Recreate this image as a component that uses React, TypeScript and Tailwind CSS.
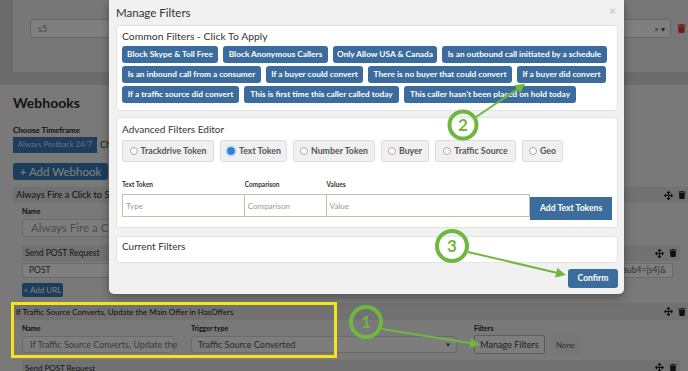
import React from 'react';
import { FaTrash, FaArrowsAlt } from 'react-icons/fa';

const filterRows = [
  [
    { label: 'Block Skype & Toll Free', w: 'w-[96px]' },
    { label: 'Block Anonymous Callers', w: 'w-[105px]' },
    { label: 'Only Allow USA & Canada', w: 'w-[104px]' },
    { label: 'Is an outbound call initiated by a schedule', w: 'w-[165px]' },
  ],
  [
    { label: 'Is an inbound call from a consumer', w: 'w-[139px]' },
    { label: 'If a buyer could convert', w: 'w-[97px]' },
    { label: 'There is no buyer that could convert', w: 'w-[144px]' },
    { label: 'If a buyer did convert', w: 'w-[89px]' },
  ],
  [
    { label: 'If a traffic source did convert', w: 'w-[117px]' },
    { label: 'This is first time this caller called today', w: 'w-[155px]' },
    { label: "This caller hasn't been placed on hold today", w: 'w-[172px]' },
  ],
];

const tokenTypes = [
  { label: 'Trackdrive Token', w: 'w-[92px]' },
  { label: 'Text Token', w: 'w-[67px]', checked: true },
  { label: 'Number Token', w: 'w-[82px]' },
  { label: 'Buyer', w: 'w-[48px]' },
  { label: 'Traffic Source', w: 'w-[81px]' },
  { label: 'Geo', w: 'w-[41px]' },
];

const RowIcons = ({ className = '' }: { className?: string }) => (
  <div className={`flex items-center gap-[5px] text-[#222] ${className}`}>
    <FaArrowsAlt size={9} />
    <FaTrash size={8} />
  </div>
);

const ModalPanel = ({ children, className = '' }: { children: React.ReactNode; className?: string }) => (
  <div className={`bg-white border border-[#e3e3e3] rounded-[3px] px-[5px] ${className}`}>{children}</div>
);

const App: React.FC = () => {
  return (
    <div className="relative w-[688px] h-[371px] overflow-hidden bg-[#d6d6d6] font-[Lato,'Liberation_Sans',Arial,sans-serif]">
      {/* Page behind the modal */}
      <div className="flex flex-col">
        <div className="ml-[13px] h-[72px] bg-[#efefef] flex items-start pt-[19px] pl-[17px] pr-[2px] gap-[6px]">
          <div className="flex-1 h-[19px] bg-white border border-[#cfcfcf] rounded-[3px] flex items-center pl-[7px] pr-[5px] text-[9px] text-[#888]">
            <span className="flex-1">s5</span>
            <span className="text-[8px] text-[#555]">× ▾</span>
          </div>
          <FaTrash size={9} className="mt-[5px] text-[#e03b3b]" />
        </div>

        <div className="mt-[13px] bg-[#f3f3f3] flex flex-col pl-[13px] h-[300px]">
          <div className="pt-[9px] text-[14px] leading-[18px] font-bold text-[#2a2a2a]">Webhooks</div>
          <div className="mt-[13px] text-[8px] leading-[10px] font-bold text-[#222]">Choose Timeframe</div>
          <div className="mt-[2px] flex items-center gap-[3px]">
            <div className="w-[84px] h-[16px] bg-[#3c79b6] flex items-center justify-center text-[7.6px] text-[#cfe0f2] whitespace-nowrap">Always Postback 24/7</div>
            <span className="text-[9px] text-[#333]">Ch</span>
          </div>
          <div className="mt-[10px] w-[95px] h-[17px] rounded-[3px] bg-[#397ab9] flex items-center justify-center text-[11.5px] text-white">+ Add Webhook</div>

          <div className="mt-[7px] h-[16px] bg-[#e2e2e2] flex items-center pl-[3px] text-[9.2px] text-[#222]">
            <span className="flex-1">Always Fire a Click to Show a Conversion</span>
            <RowIcons className="pr-[2px]" />
          </div>
          <div className="flex flex-col pl-[9px] pr-[8px]">
            <div className="mt-[3px] text-[7px] leading-[10px] font-bold text-[#222]">Name</div>
            <div className="mt-[3px] w-[320px] h-[18px] bg-[#fafafa] border border-[#d6d6d6] rounded-[3px] flex items-center pl-[8px] text-[11.5px] text-[#999]">
              Always Fire a Click to Show a Conversion
            </div>
            <div className="mt-[8px] h-[16px] bg-[#e2e2e2] flex items-center pl-[3px] text-[8.5px] text-[#333]">
              <span className="flex-1">Send POST Request</span>
              <RowIcons className="pr-[3px]" />
            </div>
            <div className="mt-[2px] flex gap-[5px] pr-[7px]">
              <div className="w-[200px] h-[15px] bg-white border border-[#d6d6d6] flex items-center pl-[6px] text-[8.5px] text-[#444]">POST</div>
              <div className="flex-1 h-[15px] bg-white border border-[#d6d6d6] flex items-center justify-end pr-[6px] text-[8.5px] text-[#666]">
                http://example.com/?sub4=[s4]&amp;
              </div>
            </div>
            <div className="mt-[5px] w-[41px] h-[14px] rounded-[2px] bg-[#397ab9] flex items-center justify-center text-[8px] text-white">+ Add URL</div>
          </div>

          <div className="mt-[6px] h-[17px] bg-[#e2e2e2] flex items-center pl-[3px] text-[8px] text-[#222]">
            <span className="flex-1">If Traffic Source Converts, Update the Main Offer in HasOffers</span>
            <RowIcons className="pr-[2px]" />
          </div>
          <div className="flex flex-col pl-[9px] pr-[8px]">
            <div className="mt-[3px] flex text-[7px] leading-[10px] font-bold text-[#222]">
              <span className="w-[169px]">Name</span>
              <span className="w-[283px]">Trigger type</span>
              <span>Filters</span>
            </div>
            <div className="mt-[2px] flex items-center">
              <div className="w-[152px] h-[17px] bg-[#fafafa] border border-[#d6d6d6] rounded-[3px] flex items-center pl-[7px] text-[9px] text-[#777] whitespace-nowrap">
                If Traffic Source Converts, Update the
              </div>
              <div className="ml-[17px] w-[266px] h-[17px] bg-[#fafafa] border border-[#d6d6d6] rounded-[3px] flex items-center pl-[6px] pr-[5px] text-[9px] text-[#555]">
                <span className="flex-1">Traffic Source Converted</span>
                <span className="text-[6px] text-[#444]">▼</span>
              </div>
              <div className="ml-[17px] w-[71px] h-[19px] bg-[#fafafa] border border-[#bdbdbd] rounded-[2px] flex items-center justify-center text-[9px] text-[#444]">Manage Filters</div>
              <div className="ml-[6px] w-[29px] h-[19px] bg-[#ececec] flex items-center justify-center text-[8px] text-[#666]">None</div>
            </div>
            <div className="mt-[6px] h-[16px] bg-[#e2e2e2] flex items-start pt-[3px] pl-[3px] text-[8px] text-[#333]">
              <span className="flex-1 leading-[10px]">Send POST Request</span>
              <RowIcons className="pr-[3px]" />
            </div>
          </div>
        </div>
      </div>

      {/* Backdrop */}
      <div className="absolute inset-0 bg-black/50" />

      {/* Manage Filters modal */}
      <div className="absolute left-[109px] top-0 w-[515px] h-[294px] bg-[#f1f1f1] rounded-b-[5px] shadow-[0_3px_10px_rgba(0,0,0,0.35)] flex flex-col pl-[7px] pr-[6px]">
        <div className="h-[25px] flex items-center justify-between">
          <span className="text-[11.5px] text-[#333]">Manage Filters</span>
          <span className="text-[12px] text-[#bbb] leading-none -mt-[4px] mr-[2px]">×</span>
        </div>

        <ModalPanel className="pt-[3px] pb-[7px]">
          <div className="text-[10.4px] leading-[14px] text-[#333] mb-[3px]">Common Filters - Click To Apply</div>
          <div className="flex flex-col gap-[3px]">
            {filterRows.map((row, i) => (
              <div key={i} className="flex gap-[5px]">
                {row.map((f) => (
                  <div
                    key={f.label}
                    className={`${f.w} h-[17px] bg-[#3b6c9b] rounded-[3px] flex items-center justify-center text-[8.3px] font-bold text-white whitespace-nowrap`}
                  >
                    {f.label}
                  </div>
                ))}
              </div>
            ))}
          </div>
        </ModalPanel>

        <ModalPanel className="mt-[6px] pt-[4px] pb-[10px]">
          <div className="text-[10px] leading-[14px] text-[#333] mb-[4px]">Advanced Filters Editor</div>
          <div className="flex gap-[6px]">
            {tokenTypes.map((t) => (
              <div
                key={t.label}
                className={`${t.w} h-[22px] bg-[#f0f0f0] border border-[#dcdcdc] rounded-[3px] flex items-center justify-center gap-[3px] text-[8.8px] font-bold text-[#555]`}
              >
                {t.checked ? (
                  <span className="w-[8px] h-[8px] rounded-full bg-[#2f85d8] border-[2px] border-[#cfe3f7] box-content -m-[1px]" />
                ) : (
                  <span className="w-[8px] h-[8px] rounded-full bg-white border border-[#aaa]" />
                )}
                <span>{t.label}</span>
              </div>
            ))}
          </div>
          <div className="mt-[18px] flex items-end">
            <div className="flex flex-col w-[123px]">
              <span className="text-[6.5px] leading-[10px] font-bold text-[#333]">Text Token</span>
              <div className="mt-[4px] h-[23px] bg-white border border-[#bdc5a9] flex items-center pl-[3px] text-[8px] text-[#999]">Type</div>
            </div>
            <div className="flex flex-col w-[82px]">
              <span className="text-[6.5px] leading-[10px] font-bold text-[#333]">Comparison</span>
              <div className="mt-[4px] h-[23px] bg-white border border-l-0 border-[#bdc5a9] flex items-center pl-[3px] text-[8px] text-[#999]">Comparison</div>
            </div>
            <div className="flex flex-col w-[204px]">
              <span className="text-[6.5px] leading-[10px] font-bold text-[#333]">Values</span>
              <div className="mt-[4px] h-[23px] bg-white border border-l-0 border-[#bdc5a9] flex items-center pl-[3px] text-[8px] text-[#999]">Value</div>
            </div>
            <div className="w-[82px] h-[23px] -mb-[3px] bg-[#3b6c9b] flex items-center justify-center text-[8.6px] font-bold text-white">Add Text Tokens</div>
          </div>
        </ModalPanel>

        <ModalPanel className="mt-[8px] h-[27px] pt-[2px]">
          <div className="text-[10px] leading-[14px] text-[#333]">Current Filters</div>
        </ModalPanel>

        <div className="mt-[6px] self-end w-[50px] h-[19px] bg-[#3b6c9b] rounded-[3px] flex items-center justify-center text-[8.6px] font-bold text-white">Confirm</div>
      </div>

      {/* Screenshot annotations */}
      <svg className="absolute inset-0 pointer-events-none" width="688" height="371" viewBox="0 0 688 371">
        <defs>
          <marker id="arrow" viewBox="0 0 10 10" refX="6" refY="5" markerWidth="5" markerHeight="5" orient="auto">
            <path d="M0 0 L10 5 L0 10 z" fill="#6fb840" />
          </marker>
        </defs>
        <rect x="12.5" y="303.5" width="323" height="53" fill="none" stroke="#f3e41c" strokeWidth="3" />

        <line x1="476" y1="117" x2="522" y2="86" stroke="#6fb840" strokeWidth="2" markerEnd="url(#arrow)" />
        <circle cx="463" cy="125" r="13.5" fill="none" stroke="#6fb840" strokeWidth="4" />
        <text x="463" y="131" textAnchor="middle" fontSize="17" fontWeight="bold" fill="#6fb840" fontFamily="Lato, Arial, sans-serif">2</text>

        <line x1="468" y1="252" x2="562" y2="274" stroke="#6fb840" strokeWidth="2" markerEnd="url(#arrow)" />
        <circle cx="452" cy="246" r="15" fill="none" stroke="#6fb840" strokeWidth="4" />
        <text x="452" y="252" textAnchor="middle" fontSize="17" fontWeight="bold" fill="#6fb840" fontFamily="Lato, Arial, sans-serif">3</text>

        <line x1="382" y1="329" x2="476" y2="344" stroke="#6fb840" strokeWidth="2" markerEnd="url(#arrow)" />
        <circle cx="366" cy="322" r="15" fill="none" stroke="#6fb840" strokeWidth="4" />
        <text x="366" y="328" textAnchor="middle" fontSize="17" fontWeight="bold" fill="#6fb840" fontFamily="Lato, Arial, sans-serif">1</text>
      </svg>
    </div>
  );
};

export default App;
